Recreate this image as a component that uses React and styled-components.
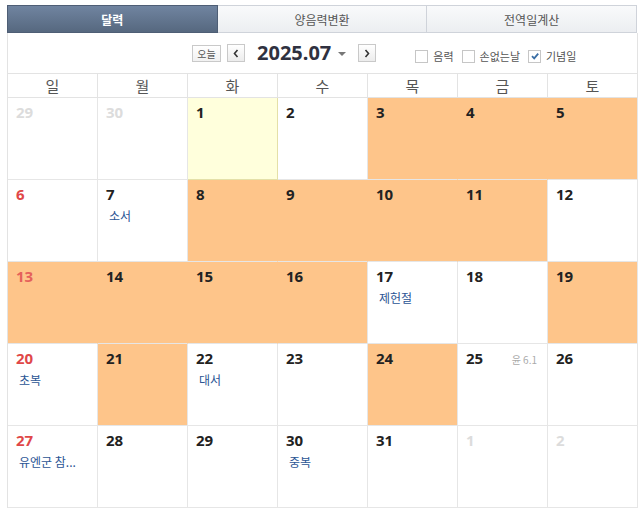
import styled, { createGlobalStyle } from "styled-components";

const GlobalStyle = createGlobalStyle`
  body {
    margin: 0;
    background: #fff;
    font-family: "Noto Sans CJK KR", "Noto Sans", sans-serif;
  }
`;

const weekdays = ["일", "월", "화", "수", "목", "금", "토"];

const labels = {
  7: "소서",
  17: "제헌절",
  20: "초복",
  22: "대서",
  27: "유엔군 참...",
  30: "중복",
};
const highlighted = [3, 4, 5, 8, 9, 10, 11, 13, 14, 15, 16, 19, 21, 24];

const buildWeeks = () => {
  const days = [
    { n: 29, other: true },
    { n: 30, other: true },
  ];
  for (let i = 1; i <= 31; i++) days.push({ n: i });
  days.push({ n: 1, other: true }, { n: 2, other: true });
  const weeks = [];
  for (let i = 0; i < days.length; i += 7) weeks.push(days.slice(i, i + 7));
  return weeks;
};

export default function App() {
  const weeks = buildWeeks();
  const isHl = (d) => d && !d.other && highlighted.includes(d.n);

  return (
    <Wrap>
      <GlobalStyle />
      <TabBar>
        <Tab active>달력</Tab>
        <Tab>양음력변환</Tab>
        <Tab>전역일계산</Tab>
      </TabBar>
      <Toolbar>
        <SmallButton>오늘</SmallButton>
        <ArrowButton>
          <svg width="8" height="9" viewBox="0 0 8 9">
            <path d="M5.5 1 L2.5 4.5 L5.5 8" fill="none" stroke="#333" strokeWidth="1.6" />
          </svg>
        </ArrowButton>
        <Title>2025.07</Title>
        <Caret />
        <ArrowButton>
          <svg width="8" height="9" viewBox="0 0 8 9">
            <path d="M2.5 1 L5.5 4.5 L2.5 8" fill="none" stroke="#333" strokeWidth="1.6" />
          </svg>
        </ArrowButton>
        <Checks>
          <Check>
            <Box />
            음력
          </Check>
          <Check>
            <Box />
            손없는날
          </Check>
          <Check>
            <Box>
              <svg width="10" height="10" viewBox="0 0 10 10">
                <path d="M2 5.2 L4.2 7.4 L8.2 2.6" fill="none" stroke="#3a6ea5" strokeWidth="1.8" />
              </svg>
            </Box>
            기념일
          </Check>
        </Checks>
      </Toolbar>
      <Grid>
        {weekdays.map((w) => (
          <HeadCell key={w}>{w}</HeadCell>
        ))}
        {weeks.map((week, wi) =>
          week.map((d, di) => {
            const hl = isHl(d);
            const nextHl = hl && isHl(week[di + 1]);
            return (
              <Cell
                key={wi + "-" + di}
                $hl={hl}
                $joined={nextHl}
                $today={!d.other && d.n === 1}
              >
                <CellTop>
                  <DayNum $other={d.other} $sun={di === 0} $hl={hl}>
                    {d.n}
                  </DayNum>
                  {!d.other && d.n === 25 && <Lunar>윤 6.1</Lunar>}
                </CellTop>
                {!d.other && labels[d.n] && <Label>{labels[d.n]}</Label>}
              </Cell>
            );
          })
        )}
      </Grid>
    </Wrap>
  );
}

const Wrap = styled.div`
  width: 631px;
  margin: 5px 0 0 7px;
`;

const TabBar = styled.div`
  display: flex;
  height: 28px;
  width: 630px;
`;

const Tab = styled.div`
  flex: 1;
  display: flex;
  align-items: center;
  justify-content: center;
  font-size: 12px;
  box-sizing: border-box;
  color: ${(p) => (p.active ? "#fff" : "#555")};
  font-weight: ${(p) => (p.active ? "bold" : "normal")};
  background: ${(p) =>
    p.active
      ? "linear-gradient(#7084a0, #56687f)"
      : "linear-gradient(#f9fafb, #eceef1)"};
  border: 1px solid ${(p) => (p.active ? "#4e5e75" : "#cfd3da")};
  border-left-width: ${(p) => (p.active ? "1px" : "0")};
`;

const Toolbar = styled.div`
  display: flex;
  align-items: center;
  height: 40px;
  box-sizing: border-box;
  padding-left: 184px;
  border-left: 1px solid #e3e3e3;
  border-right: 1px solid #e3e3e3;
`;

const SmallButton = styled.div`
  width: 29px;
  height: 17px;
  box-sizing: border-box;
  border: 1px solid #c9c9c9;
  background: linear-gradient(#fff, #f1f1f1);
  font-size: 10px;
  color: #555;
  display: flex;
  align-items: center;
  justify-content: center;
  margin-right: 6px;
`;

const ArrowButton = styled.div`
  width: 18px;
  height: 18px;
  box-sizing: border-box;
  border: 1px solid #c9c9c9;
  background: linear-gradient(#fff, #ececec);
  display: flex;
  align-items: center;
  justify-content: center;
`;

const Title = styled.div`
  font-family: "Noto Sans", "Liberation Sans", sans-serif;
  font-size: 20px;
  font-weight: bold;
  color: #2f3140;
  margin-left: 12px;
  line-height: 24px;
`;

const Caret = styled.div`
  width: 0;
  height: 0;
  border-left: 4px solid transparent;
  border-right: 4px solid transparent;
  border-top: 4px solid #777;
  margin: 2px 12px 0 7px;
`;

const Checks = styled.div`
  display: flex;
  align-items: center;
  gap: 8px;
  margin-left: 39px;
  margin-top: 6px;
`;

const Check = styled.div`
  display: flex;
  align-items: center;
  gap: 5px;
  font-size: 11px;
  color: #555;
`;

const Box = styled.div`
  width: 13px;
  height: 13px;
  box-sizing: border-box;
  border: 1px solid #c6c6c6;
  background: #fff;
  display: flex;
  align-items: center;
  justify-content: center;
`;

const Grid = styled.div`
  display: grid;
  grid-template-columns: repeat(7, 90px);
  border-left: 1px solid #e3e3e3;
  border-top: 1px solid #e3e3e3;
  width: 631px;
  box-sizing: border-box;
`;

const HeadCell = styled.div`
  height: 24px;
  box-sizing: border-box;
  border-right: 1px solid #e3e3e3;
  border-bottom: 1px solid #e3e3e3;
  display: flex;
  align-items: center;
  justify-content: center;
  font-size: 15px;
  color: #555;
`;

const Cell = styled.div`
  height: 82px;
  box-sizing: border-box;
  padding: 4px 8px 0 8px;
  border-right: 1px solid
    ${(p) => (p.$joined ? "#fec58a" : p.$today ? "#e4e0a8" : "#e6e6e6")};
  border-bottom: 1px solid ${(p) => (p.$today ? "#e4e0a8" : "#e6e6e6")};
  background: ${(p) => (p.$hl ? "#fec58a" : p.$today ? "#ffffdc" : "#fff")};
`;

const CellTop = styled.div`
  display: flex;
  justify-content: space-between;
  align-items: baseline;
`;

const DayNum = styled.span`
  font-family: "Noto Sans", "Liberation Sans", sans-serif;
  font-size: 15px;
  line-height: 20px;
  font-weight: bold;
  color: ${(p) =>
    p.$other ? "#dcdcdc" : p.$sun ? (p.$hl ? "#e5605a" : "#e04848") : "#222"};
`;

const Lunar = styled.span`
  font-size: 10px;
  color: #aaa;
  margin-right: 2px;
`;

const Label = styled.div`
  font-size: 12px;
  line-height: 16px;
  color: #2b5594;
  margin: 4px 0 0 3px;
  white-space: nowrap;
`;
